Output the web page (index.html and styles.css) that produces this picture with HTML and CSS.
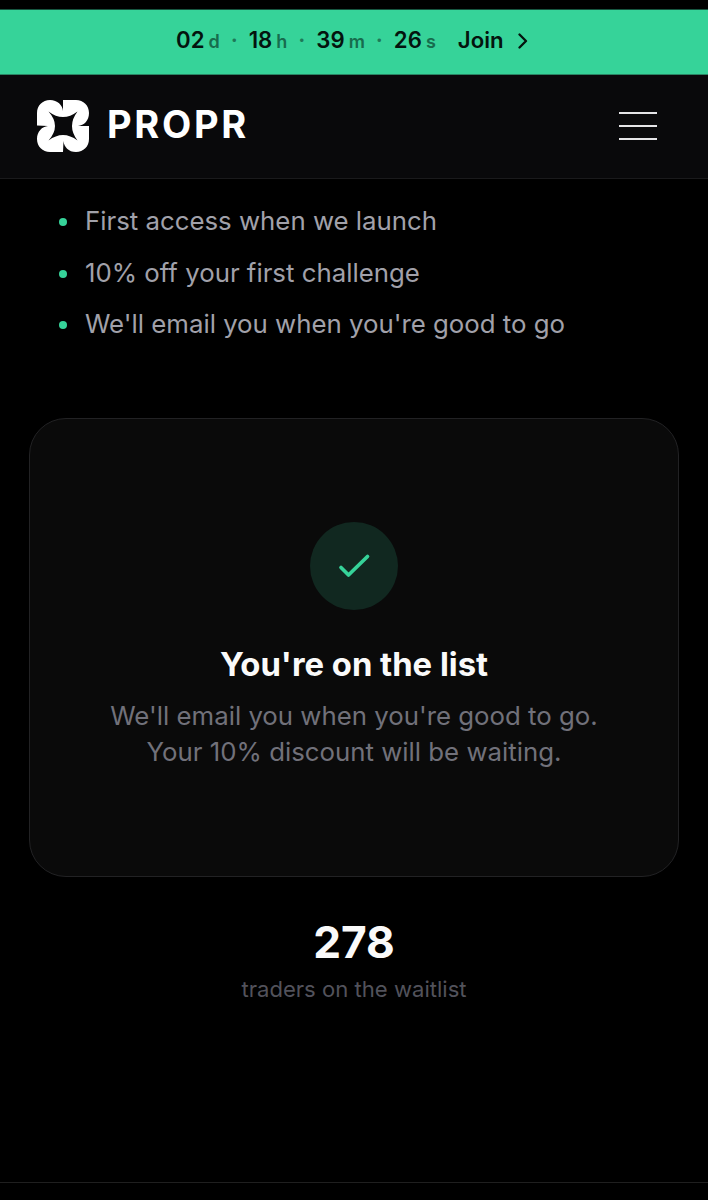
FILE: index.html
```
<!DOCTYPE html>
<html lang="en">
<head>
    <meta charset="UTF-8">
    <meta name="viewport" content="width=device-width, initial-scale=1.0">
    <title>Propr</title>
    <link rel="stylesheet" href="styles.css">
</head>
<body>
    <a class="banner" href="#">
        <span class="time">02</span><span class="unit">d</span>
        <span class="dot">·</span>
        <span class="time">18</span><span class="unit">h</span>
        <span class="dot">·</span>
        <span class="time">39</span><span class="unit">m</span>
        <span class="dot">·</span>
        <span class="time">26</span><span class="unit">s</span>
        <span class="join">Join</span>
        <svg class="chevron" viewBox="0 0 10 16"><path d="M1.500 1.500 8 8l-6.500 6.500"/></svg>
    </a>
    <header class="header">
        <a class="brand" href="#">
            <svg class="logo" viewBox="0 0 52 52">
                <path class="petals" d="M0 25.500V13C0 5.500 5.500 0 13 0S25.500 5 26 11V0H39C46.500 0 52 5.500 52 13S47 25.500 41 26H52V39C52 46.500 46.500 52 39 52S27 47 26.500 41L26 52H13C5.500 52 0 46.500 0 39S5 26.500 11 26Z"/>
                <path class="star" d="M11.500 11.500Q26 22.500 40.500 11.500Q29.500 26 40.500 40.500Q26 29.500 11.500 40.500Q24.500 26 11.500 11.500Z"/>
            </svg>
            <span class="brand-name">PROPR</span>
        </a>
        <button class="menu" aria-label="Menu"><i></i><i></i><i></i></button>
    </header>
    <main>
        <ul class="perks">
            <li>First access when we launch</li>
            <li>10% off your first challenge</li>
            <li>We'll email you when you're good to go</li>
        </ul>
        <section class="card">
            <div class="check">
                <svg viewBox="0 0 44 44"><path d="M9 23.500l7.500 7.500L35.500 12.500"/></svg>
            </div>
            <h2>You're on the list</h2>
            <p>We'll email you when you're good to go.<br>Your 10% discount will be waiting.</p>
        </section>
        <div class="count">
            <strong>278</strong>
            <span>traders on the waitlist</span>
        </div>
    </main>
    <footer class="footer"></footer>
</body>
</html>
```
FILE: styles.css
```
* {
    box-sizing: border-box;
}
body {
    margin: 0;
    padding-top: 9px;
    height: 1200px;
    overflow: hidden;
    background: #000;
    color: #fafafa;
    font-family: Inter, sans-serif;
}
a {
    color: inherit;
    text-decoration: none;
}
.banner {
    display: flex;
    align-items: baseline;
    height: 66px;
    padding: 16px 0 0 176px;
    background: #36d399;
    border-top: 1px solid #165640;
    border-bottom: 1px solid #2a8564;
    color: #04140e;
    font-size: 22.2px;
    line-height: 28px;
    font-weight: 600;
}
.unit {
    margin-left: 4px;
    color: #176c4d;
    font-size: 18px;
}
.dot {
    width: 29px;
    text-align: center;
    color: #1d7a58;
}
.join {
    margin-left: 22px;
}
.chevron {
    width: 10px;
    height: 16px;
    margin-left: 14px;
    align-self: flex-start;
    margin-top: 7px;
    fill: none;
    stroke: #04140e;
    stroke-width: 2.3;
    stroke-linecap: round;
    stroke-linejoin: round;
}
.header {
    display: flex;
    align-items: center;
    justify-content: space-between;
    height: 104px;
    padding: 0 51px 2px 37px;
    background: #09090b;
    border-bottom: 1px solid #1a1a1c;
}
.brand {
    display: flex;
    align-items: center;
}
.logo {
    width: 52px;
    height: 52px;
}
.petals {
    fill: #fff;
}
.star {
    fill: #09090b;
}
.brand-name {
    margin-left: 18px;
    padding-bottom: 4px;
    color: #fff;
    font-size: 38px;
    font-weight: 700;
    letter-spacing: 2.7px;
}
.menu {
    display: flex;
    flex-direction: column;
    gap: 11px;
    width: 38px;
    padding: 0;
    background: none;
    border: none;
}
.menu i {
    height: 2px;
    background: #e4e4e7;
}
.perks {
    display: flex;
    flex-direction: column;
    gap: 15px;
    margin: 24px 0 0;
    padding: 0 59px;
    list-style: none;
    color: #a1a1aa;
    font-size: 25.8px;
    line-height: 36.7px;
}
.perks li {
    display: flex;
    align-items: center;
    gap: 18px;
}
.perks li::before {
    content: "";
    width: 8px;
    height: 8px;
    margin-top: 1px;
    border-radius: 50%;
    background: #36d399;
}
.card {
    display: flex;
    flex-direction: column;
    align-items: center;
    height: 459px;
    margin: 75px 29px 0;
    padding-top: 103px;
    background: #0a0a0a;
    border: 1px solid #222224;
    border-radius: 37px;
    text-align: center;
}
.check {
    display: flex;
    align-items: center;
    justify-content: center;
    width: 88px;
    height: 88px;
    border-radius: 50%;
    background: #112820;
}
.check svg {
    width: 44px;
    height: 44px;
    fill: none;
    stroke: #36d399;
    stroke-width: 3.7;
    stroke-linecap: round;
    stroke-linejoin: round;
}
.card h2 {
    margin: 29px 0 8px;
    font-size: 32.8px;
    line-height: 51px;
    font-weight: 700;
}
.card p {
    margin: 0;
    color: #71717a;
    font-size: 25.8px;
    line-height: 36px;
}
.count {
    display: flex;
    flex-direction: column;
    align-items: center;
    margin-top: 39px;
}
.count strong {
    font-size: 44.2px;
    line-height: 52px;
    font-weight: 700;
}
.count span {
    margin-top: 6px;
    color: #52525b;
    font-size: 22.1px;
    line-height: 30px;
}
.footer {
    margin-top: 178px;
    border-top: 1px solid #1f1f1f;
}
```
